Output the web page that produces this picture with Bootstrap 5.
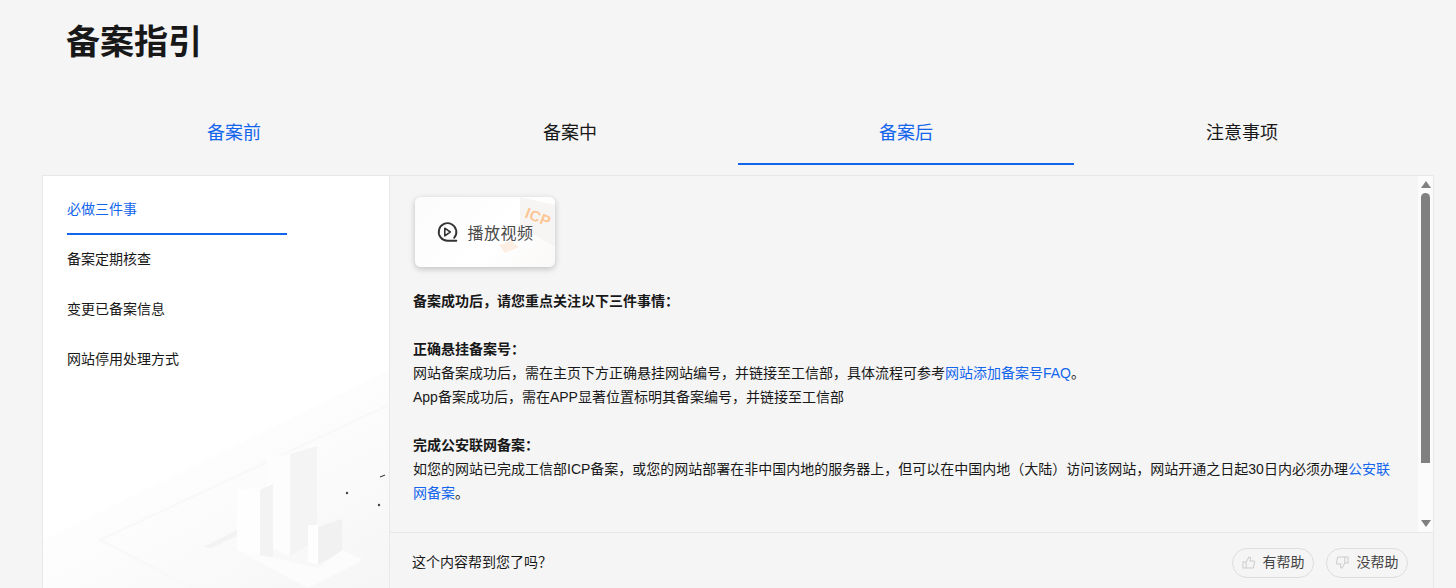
<!DOCTYPE html>
<html lang="zh-CN">
<head>
  <meta charset="UTF-8">
  <title>备案指引</title>
  <link href="https://cdn.jsdelivr.net/npm/bootstrap@5.3.0/dist/css/bootstrap.min.css" rel="stylesheet">
  <style>
    html, body { height: 100%; overflow: hidden; }
    body {
      background: #f5f5f5;
      color: #181818;
      font-family: "Liberation Sans", "Noto Sans CJK SC", sans-serif;
      font-size: 14px;
    }
    a { color: #1366ec; text-decoration: none; }
    .page-title { font-size: 34px; font-weight: 700; line-height: 44px; margin: 20px 0 0 66px; color: #181818; }
    .guide-tabs { margin: 39px 46px 0 66px; }
    .guide-tabs .nav-link {
      color: #181818; font-size: 18px; line-height: 26px; padding: 17px 0 17px;
      border-bottom: 2px solid transparent; border-radius: 0;
    }
    .guide-tabs .nav-link.blue { color: #1366ec; }
    .guide-tabs .nav-link.active { color: #1366ec; border-bottom-color: #1366ec; }
    .guide-panel {
      margin: 10px 22px 0 42px; height: 413px;
      border: 1px solid #e8e8e8; border-bottom: 0;
    }
    .side-menu { width: 347px; background: #fff; border-right: 1px solid #e8e8e8; padding: 8px 102px 0 24px; }
    .side-art { left: 0; bottom: 0; width: 346px; height: 218px; }
    .side-item { line-height: 50px; color: #181818; }
    .side-item.active { color: #1366ec; border-bottom: 2px solid #1366ec; height: 51px; margin-bottom: -1px; }
    .doc-scroll { padding: 21px 28px 0 23px; overflow: hidden; line-height: 24px; }
    .video-card {
      width: 140px; height: 70px; margin-left: 2px; border-radius: 6px; color: #4a4a4a; font-size: 16px; letter-spacing: .5px;
      background: linear-gradient(135deg, #fbfbfb, #fff 60%, #faf8f7);
      box-shadow: 0 2px 6px rgba(0, 0, 0, .22); overflow: hidden;
    }
    .video-card span { padding: 3px 0 0 1px; }
    .video-art { right: 0; top: 0; width: 56px; height: 70px; }
    .icp { font: 700 15px/1 "Liberation Sans", sans-serif; fill: #fdc594; }
    .doc-text { margin-top: 22px; }
    .doc-text p { margin: 0 0 24px; }
    .doc-text strong { font-weight: 700; }
    .scroll-col { width: 15px; background: #fbfbfb; padding-top: 5px; }
    .arrow-up { border: 5px solid transparent; border-top: 0; border-bottom: 7px solid #808080; margin: 0 auto; }
    .arrow-down { border: 5px solid transparent; border-bottom: 0; border-top: 7px solid #808080; margin: 0 auto 5px; }
    .thumb { width: 9px; height: 270px; margin: 5px auto 0; background: #808080; border-radius: 5px 5px 0 0; }
    .doc-foot { height: 56px; border-top: 1px solid #e8e8e8; padding: 4px 25px 0 22px; }
    .help-btn {
      width: 82px; height: 30px; border: 1px solid #ddd; border-radius: 15px; background: transparent;
      color: #444; font-size: 14px; gap: 8px; padding: 0;
    }
    .help-group { gap: 12px; }
  </style>
</head>
<body>

<h1 class="page-title">备案指引</h1>

<ul class="nav nav-justified guide-tabs text-center">
  <li class="nav-item"><a class="nav-link blue" href="#">备案前</a></li>
  <li class="nav-item"><a class="nav-link" href="#">备案中</a></li>
  <li class="nav-item"><a class="nav-link active" href="#">备案后</a></li>
  <li class="nav-item"><a class="nav-link" href="#">注意事项</a></li>
</ul>

<div class="guide-panel d-flex">
  <div class="side-menu position-relative flex-shrink-0">
    <svg class="side-art position-absolute" viewBox="0 0 346 218" aria-hidden="true">
      <defs>
        <linearGradient id="fade" x1="0.1" y1="0.1" x2="0.9" y2="1">
          <stop offset="0.2" stop-color="#fff"/><stop offset=".6" stop-color="#fbfbfb"/><stop offset="1" stop-color="#f6f6f6"/>
        </linearGradient>
      </defs>
      <polygon points="346,0 346,218 0,218 0,170" fill="url(#fade)"/>
      <polyline points="346,35 57,170 150,218" fill="none" stroke="#f8f8f8" stroke-width="2"/>
      <polygon points="160,177 194,160 194,166 168,178" fill="#f3f3f3"/>
      <polygon points="224,88 247,84 247,186 224,176" fill="#fdfdfd"/>
      <polygon points="247,84 274,76 274,170 247,186" fill="#f4f4f4"/>
      <polygon points="194,120 217,118 217,192 194,180" fill="#fefefe"/>
      <polygon points="217,120 230,114 230,186 217,192" fill="#f3f3f3"/>
      <polygon points="265,155 275,155 275,194 265,192" fill="#fefefe"/>
      <polygon points="275,157 299,149 299,182 275,194" fill="#f1f1f1"/>
      <polygon points="194,180 265,218 320,190 299,180 275,198 230,188" fill="#fcfcfc"/>
      <circle cx="304" cy="123" r="1.200" fill="#444"/>
      <circle cx="336" cy="135" r="1.200" fill="#444"/>
      <line x1="337" y1="107" x2="342" y2="105" stroke="#444" stroke-width="1.200"/>
    </svg>
    <div class="position-relative">
      <div class="side-item active">必做三件事</div>
      <div class="side-item">备案定期核查</div>
      <div class="side-item">变更已备案信息</div>
      <div class="side-item">网站停用处理方式</div>
    </div>
  </div>

  <div class="flex-grow-1 d-flex flex-column">
    <div class="d-flex flex-grow-1 overflow-hidden">
      <div class="doc-scroll flex-grow-1">
        <div class="video-card position-relative d-flex align-items-center justify-content-center gap-2">
          <svg class="video-art position-absolute" viewBox="0 0 56 70" aria-hidden="true">
            <polygon points="21,0 56,8 56,50 21,30" fill="#f7f5f4"/>
            <text class="icp" x="25" y="20" transform="rotate(22 25 20)">ICP</text>
            <polygon points="0,48 12,44 20,50 6,56" fill="#fdeee3"/>
          </svg>
          <svg class="position-relative" width="22" height="22" viewBox="0 0 20 20" aria-hidden="true">
            <path d="M18.500 18h-8a8 8 0 1 1 6-2.700" fill="none" stroke="#333" stroke-width="1.700" stroke-linecap="round"/>
            <path d="M8 6.500l5 3.500-5 3.500z" fill="none" stroke="#333" stroke-width="1.400" stroke-linejoin="round"/>
          </svg>
          <span class="position-relative">播放视频</span>
        </div>
        <div class="doc-text">
          <p><strong>备案成功后，请您重点关注以下三件事情：</strong></p>
          <p><strong>正确悬挂备案号：</strong><br>
          网站备案成功后，需在主页下方正确悬挂网站编号，并链接至工信部，具体流程可参考<a href="#">网站添加备案号FAQ</a>。<br>
          App备案成功后，需在APP显著位置标明其备案编号，并链接至工信部</p>
          <p><strong>完成公安联网备案：</strong><br>
          如您的网站已完成工信部ICP备案，或您的网站部署在非中国内地的服务器上，但可以在中国内地（大陆）访问该网站，网站开通之日起30日内必须办理<a href="#">公安联</a><br><a href="#">网备案</a>。</p>
        </div>
      </div>
      <div class="scroll-col flex-shrink-0 d-flex flex-column">
        <div class="arrow-up"></div>
        <div class="thumb"></div>
        <div class="arrow-down mt-auto"></div>
      </div>
    </div>
    <div class="doc-foot d-flex align-items-center justify-content-between flex-shrink-0">
      <span>这个内容帮到您了吗？</span>
      <div class="help-group d-flex">
        <button class="help-btn btn d-flex align-items-center justify-content-center">
          <svg width="13" height="13" viewBox="0 0 14 14" aria-hidden="true">
            <path d="M4.500 6.500L7.500 1c1.200 0 1.800.8 1.600 2L8.700 5.500h3.800c.7 0 1 .5.900 1.100l-1 5.800c-.1.400-.4.600-.8.600H4.500zM4.500 6.500h-3.500v6.500h3.500" fill="none" stroke="#ccc" stroke-width="1.100"/>
          </svg>
          有帮助
        </button>
        <button class="help-btn btn d-flex align-items-center justify-content-center">
          <svg width="13" height="13" viewBox="0 0 14 14" aria-hidden="true">
            <path d="M9.500 7.500L6.500 13c-1.200 0-1.800-.8-1.600-2l.4-2.500H1.500c-.7 0-1-.5-.9-1.100l1-5.800c.1-.4.400-.6.800-.6h7.100zM9.500 7.500h3.500V1H9.500" fill="none" stroke="#ccc" stroke-width="1.100"/>
          </svg>
          没帮助
        </button>
      </div>
    </div>
  </div>
</div>

<script src="https://cdn.jsdelivr.net/npm/bootstrap@5.3.0/dist/js/bootstrap.bundle.min.js"></script>
</body>
</html>
